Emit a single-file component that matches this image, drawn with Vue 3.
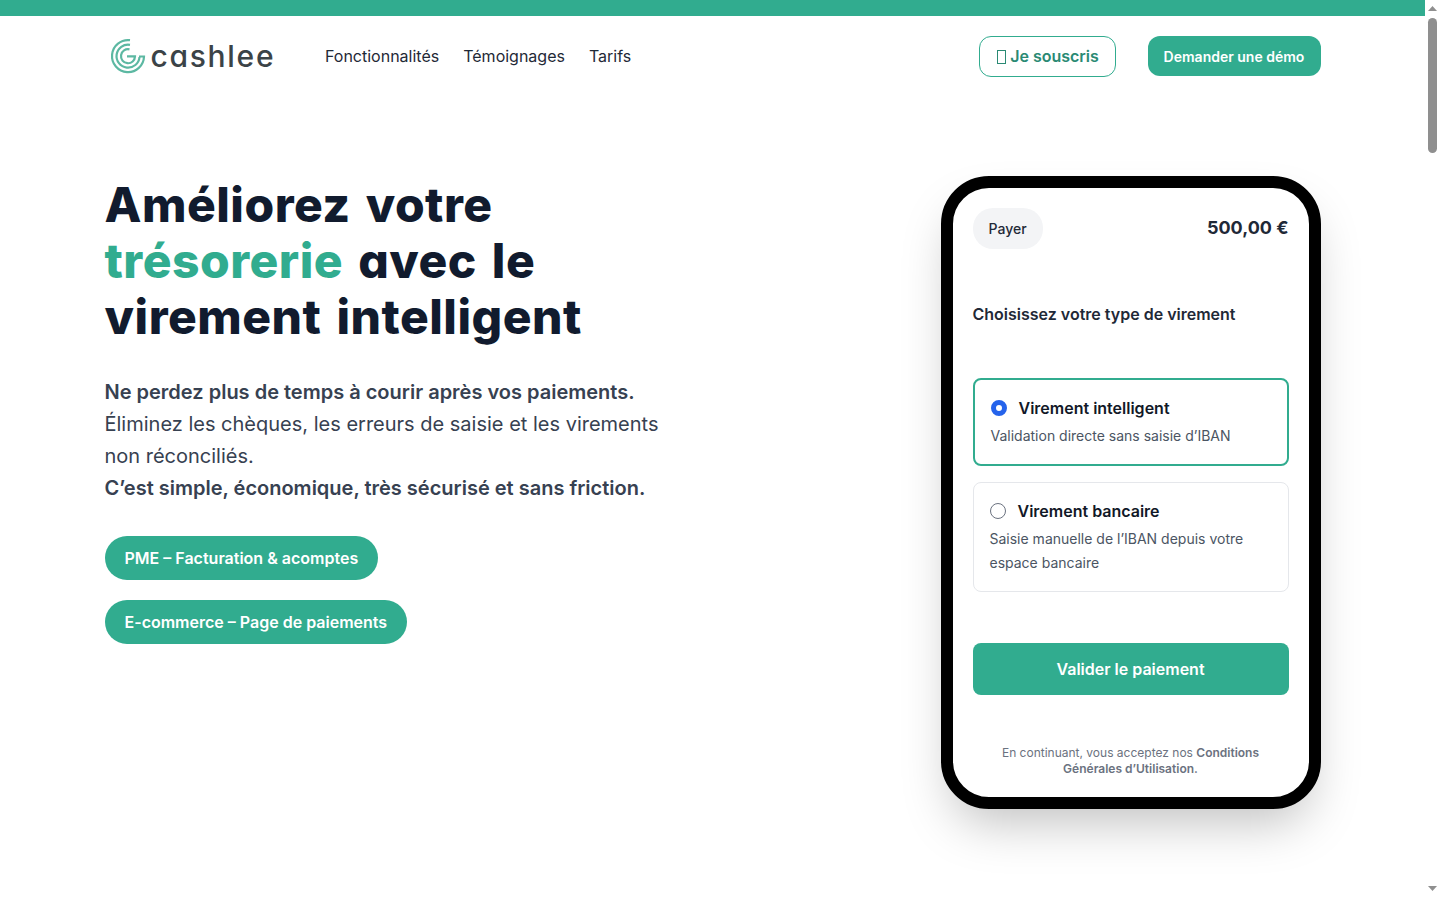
<template>
  <div class="page">
    <div class="top-bar"></div>

    <header class="header">
      <div class="header-left">
        <a class="logo" href="#">
          <svg class="logo-mark" width="36" height="36" viewBox="0 0 36 36" fill="none" stroke="#5cb8a2" stroke-width="2.2">
            <path d="M20 2.2 A16 16 0 1 0 34 18.5 H29" />
            <path d="M20 6.8 A11.5 11.5 0 1 0 29.5 19" />
            <path d="M19.5 11.4 A7 7 0 1 0 25 18.4 H17" />
          </svg>
          <span class="logo-text">cashlee</span>
        </a>
        <nav class="nav">
          <a v-for="link in links" :key="link" href="#">{{ link }}</a>
        </nav>
      </div>
      <div class="header-right">
        <a class="btn-outline" href="#"><span class="tofu"></span>Je souscris</a>
        <a class="btn-solid" href="#">Demander une démo</a>
      </div>
    </header>

    <main class="hero">
      <section class="hero-text">
        <h1>Améliorez votre <span class="green">trésorerie</span> avec le virement intelligent</h1>
        <p class="lead">
          <strong>Ne perdez plus de temps à courir après vos paiements.</strong><br />
          Éliminez les chèques, les erreurs de saisie et les virements non réconciliés.<br />
          <strong>C’est simple, économique, très sécurisé et sans friction.</strong>
        </p>
        <div class="pills">
          <a v-for="pill in pills" :key="pill" class="pill" href="#">{{ pill }}</a>
        </div>
      </section>

      <aside class="phone">
        <div class="screen">
          <div class="screen-top">
            <span class="payer">Payer</span>
            <span class="amount">500,00 €</span>
          </div>
          <h2 class="choose">Choisissez votre type de virement</h2>

          <div class="option active">
            <div class="option-head">
              <span class="radio checked"></span>
              <span class="option-title">Virement intelligent</span>
            </div>
            <p class="option-desc">Validation directe sans saisie d’IBAN</p>
          </div>

          <div class="option">
            <div class="option-head">
              <span class="radio"></span>
              <span class="option-title">Virement bancaire</span>
            </div>
            <p class="option-desc">Saisie manuelle de l’IBAN depuis votre espace bancaire</p>
          </div>

          <button class="validate">Valider le paiement</button>

          <p class="terms">En continuant, vous acceptez nos <strong>Conditions Générales d’Utilisation.</strong></p>
        </div>
      </aside>
    </main>

    <div class="scrollbar" aria-hidden="true">
      <svg width="15" height="15" viewBox="0 0 15 15"><path d="M3 11 L7.5 6 L12 11 Z" fill="#8f8f8f" /></svg>
      <div class="thumb"></div>
      <svg class="arrow-down" width="15" height="15" viewBox="0 0 15 15"><path d="M3 4 L7.5 9 L12 4 Z" fill="#8f8f8f" /></svg>
    </div>
  </div>
</template>

<script setup>
const links = ["Fonctionnalités", "Témoignages", "Tarifs"];
const pills = ["PME – Facturation & acomptes", "E-commerce – Page de paiements"];
</script>

<style>
body {
  background: #fff;
}
</style>

<style scoped>
.page {
  position: relative;
  box-sizing: border-box;
  height: 900px;
  overflow: hidden;
  padding-right: 15px;
  font-family: Inter, "Liberation Sans", sans-serif;
  color: #111827;
  background: #fff;
}

a {
  text-decoration: none;
  color: inherit;
}

.top-bar {
  height: 16px;
  background: #31ac8f;
}

.scrollbar {
  position: absolute;
  top: 0;
  right: 0;
  width: 15px;
  height: 900px;
  display: flex;
  flex-direction: column;
  background: #fff;
}

.thumb {
  width: 9px;
  height: 135px;
  margin: 3px 0 0 3px;
  border-radius: 5px;
  background: #8f8f8f;
}

.arrow-down {
  margin-top: auto;
  margin-bottom: 3px;
}

.header {
  max-width: 1216px;
  margin: 0 auto;
  padding: 20px 0;
  height: 40px;
  display: flex;
  align-items: center;
  justify-content: space-between;
}

.header-left {
  display: flex;
  align-items: center;
}

.logo {
  display: flex;
  align-items: center;
  gap: 5px;
  margin-left: 5px;
  width: 215.5px;
}

.logo-text {
  font-size: 30px;
  font-weight: 500;
  letter-spacing: 1.7px;
  color: #3b4347;
  font-feature-settings: "cv11";
}

.nav {
  display: flex;
  gap: 24px;
  font-size: 16px;
  color: #1f2937;
}

.header-right {
  display: flex;
  align-items: center;
  gap: 32px;
}

.btn-outline {
  box-sizing: border-box;
  width: 137px;
  height: 41px;
  display: flex;
  align-items: center;
  justify-content: center;
  gap: 4px;
  border: 1px solid #31ac8f;
  border-radius: 12px;
  color: #2a8a74;
  font-size: 16px;
  font-weight: 600;
}

/* missing-glyph box in front of the label */
.tofu {
  box-sizing: border-box;
  width: 9px;
  height: 14px;
  margin: 2px 0 0 2px;
  border: 1px solid #2a8a74;
}

.btn-solid {
  width: 173px;
  height: 40px;
  display: flex;
  align-items: center;
  justify-content: center;
  background: #31ac8f;
  color: #fff;
  border-radius: 12px;
  font-size: 14px;
  font-weight: 600;
}

.hero {
  max-width: 1216px;
  margin: 0 auto;
  padding-top: 80px;
  display: flex;
  justify-content: space-between;
  align-items: flex-start;
}

.hero-text {
  width: 560px;
  padding-top: 1px;
}

h1 {
  margin: 0;
  font-size: 48px;
  line-height: 56px;
  font-weight: 800;
  color: #111b2e;
  word-spacing: 4px;
  letter-spacing: 0.5px;
  font-feature-settings: "cv11";
}

.green {
  color: #31ac8f;
}

.lead {
  margin: 31px 0 0;
  font-size: 20px;
  line-height: 32px;
  color: #374151;
}

.lead strong {
  font-weight: 600;
}

.pills {
  margin-top: 32px;
  display: flex;
  flex-direction: column;
  align-items: flex-start;
  gap: 20px;
}

.pill {
  height: 44px;
  padding: 0 20px;
  display: flex;
  align-items: center;
  background: #31ac8f;
  color: #fff;
  border-radius: 22px;
  font-size: 16px;
  font-weight: 600;
}

.phone {
  box-sizing: border-box;
  width: 380px;
  height: 633px;
  border: 12px solid #000;
  border-radius: 48px;
  box-shadow: 0 25px 50px -12px rgba(0, 0, 0, 0.25);
  background: #fff;
}

.screen {
  padding: 20px 20px 0;
}

.screen-top {
  display: flex;
  justify-content: space-between;
  align-items: flex-start;
}

.payer {
  padding: 0 16px;
  height: 41px;
  display: flex;
  align-items: center;
  border-radius: 20px;
  background: #f3f4f6;
  font-size: 14px;
  font-weight: 500;
  color: #1f2937;
}

.amount {
  font-size: 18px;
  line-height: 40px;
  font-weight: 700;
  color: #1f2937;
}

.choose {
  margin: 53px 0 52px;
  font-size: 16px;
  line-height: 24px;
  font-weight: 600;
  color: #1f2937;
}

.option {
  box-sizing: border-box;
  margin-bottom: 16px;
  padding: 16px;
  border: 1px solid #e5e7eb;
  border-radius: 8px;
}

.option.active {
  border: 2px solid #31ac8f;
}

.option-head {
  display: flex;
  align-items: center;
  gap: 12px;
}

.option-title {
  font-size: 16px;
  line-height: 24px;
  font-weight: 600;
  color: #111827;
}

.radio {
  box-sizing: border-box;
  width: 16px;
  height: 16px;
  border: 1px solid #6b7280;
  border-radius: 50%;
  background: #fff;
}

.radio.checked {
  border: 5px solid #2563eb;
}

.option-desc {
  margin: 4px 0 0;
  font-size: 14px;
  line-height: 24px;
  color: #4b5563;
}

.validate {
  display: block;
  width: 100%;
  height: 52px;
  margin-top: 51px;
  border: 0;
  border-radius: 8px;
  background: #31ac8f;
  color: #fff;
  font-family: inherit;
  font-size: 16px;
  font-weight: 600;
}

.terms {
  margin: 50px 16px 0;
  font-size: 12px;
  line-height: 16px;
  text-align: center;
  color: #6b7280;
}

.terms strong {
  font-weight: 600;
}
</style>
